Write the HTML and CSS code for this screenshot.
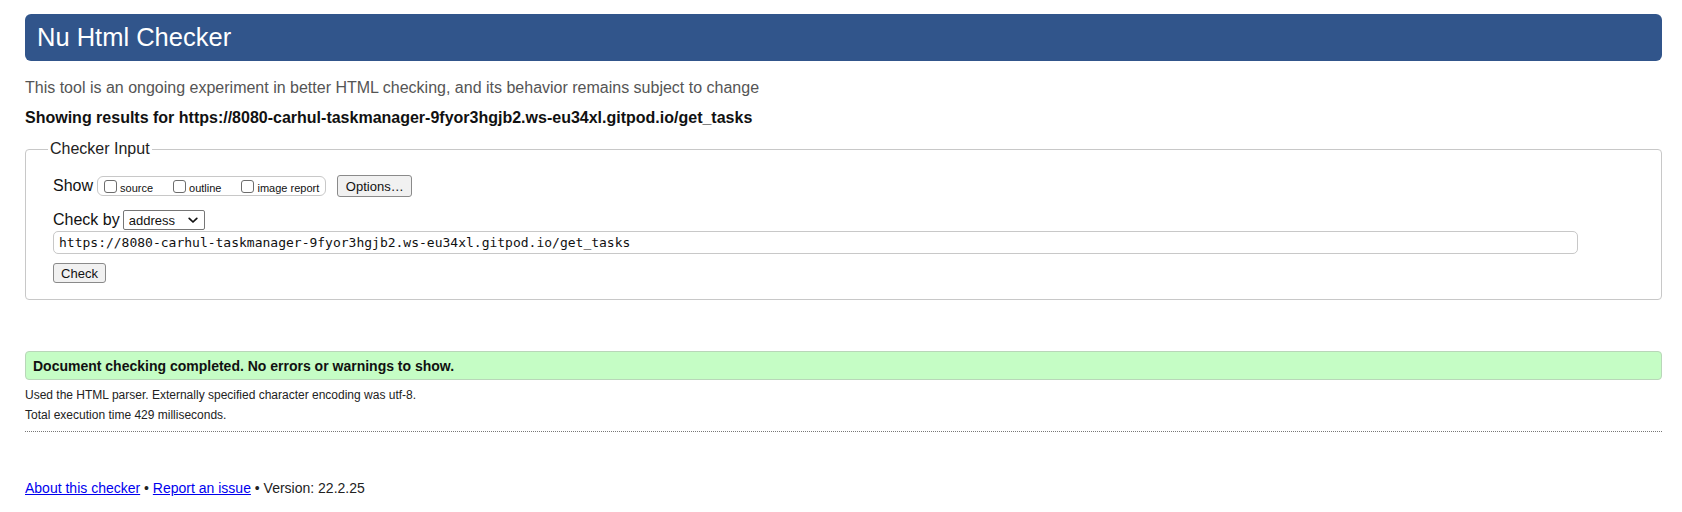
FILE: index.html
```html
<!DOCTYPE html>
<html lang="en">
<head>
<meta charset="utf-8">
<title>Nu Html Checker</title>
<link rel="stylesheet" href="styles.css">
</head>
<body>
<h1 class="title">Nu Html Checker</h1>
<p class="intro">This tool is an ongoing experiment in better HTML checking, and its behavior remains subject to change</p>
<p class="showing">Showing results for https://8080-carhul-taskmanager-9fyor3hgjb2.ws-eu34xl.gitpod.io/get_tasks</p>
<form class="checker">
  <fieldset class="input-set">
    <legend class="legend">Checker Input</legend>
    <div class="row show-row">
      <span class="label">Show</span>
      <span class="cb-group">
        <label class="cb-item"><input type="checkbox" class="cb"><span class="cb-text">source</span></label>
        <label class="cb-item"><input type="checkbox" class="cb"><span class="cb-text">outline</span></label>
        <label class="cb-item"><input type="checkbox" class="cb"><span class="cb-text">image report</span></label>
      </span>
      <button type="button" class="btn options">Options…</button>
    </div>
    <div class="row by-row">
      <span class="label">Check by</span>
      <span class="select-wrap">
        <select class="select"><option>address</option></select>
        <svg class="chev" width="10" height="7" viewBox="0 0 10 7"><path d="M1.2 1.3 L5 5 L8.8 1.3" fill="none" stroke="#111" stroke-width="1.7" stroke-linecap="round" stroke-linejoin="round"/></svg>
      </span>
    </div>
    <input class="url" type="text" value="https://8080-carhul-taskmanager-9fyor3hgjb2.ws-eu34xl.gitpod.io/get_tasks">
    <div class="row">
      <button type="button" class="btn check">Check</button>
    </div>
  </fieldset>
</form>
<p class="success">Document checking completed. No errors or warnings to show.</p>
<div class="details">
  <p class="detail">Used the HTML parser. Externally specified character encoding was utf-8.</p>
  <p class="detail">Total execution time 429 milliseconds.</p>
</div>
<p class="footer"><a href="#">About this checker</a> • <a href="#">Report an issue</a> • Version: 22.2.25</p>
</body>
</html>
```

FILE: styles.css
```css
html, body {
  background: #fff;
}
body {
  margin: 0;
  padding: 14px 20px 0 25px;
  font-family: "Liberation Sans", Arial, Helvetica, sans-serif;
  font-size: 16px;
  color: #111;
}
.title {
  margin: 0;
  height: 47px;
  display: flex;
  align-items: center;
  padding-left: 12px;
  background: #31558b;
  color: #fff;
  font-size: 25.5px;
  font-weight: normal;
  border-radius: 6px;
}
.intro {
  margin: 17px 0 0;
  line-height: 20px;
  color: #555;
}
.showing {
  margin: 10px 0 0;
  line-height: 20px;
  font-weight: bold;
  color: #111;
}
.checker {
  margin: 11px 0 0;
}
.input-set {
  margin: 0;
  padding: 0 20px 16px 27px;
  border: 1px solid #c8c8c8;
  border-radius: 4px;
  min-width: 0;
}
.legend {
  margin-left: -5px;
  padding: 0 2px;
  line-height: 20px;
  color: #222;
}
.row {
  display: flex;
  align-items: center;
}
.show-row {
  margin-top: 16px;
  height: 22px;
}
.label {
  line-height: 20px;
  color: #111;
}
.cb-group {
  display: flex;
  align-items: center;
  height: 18px;
  margin-left: 4px;
  padding: 0 6px;
  border: 1px solid #c8c8c8;
  border-radius: 6px;
}
.cb-item {
  display: flex;
  align-items: flex-end;
  margin-right: 20px;
}
.cb-item:last-child {
  margin-right: 0;
}
.cb {
  appearance: none;
  -webkit-appearance: none;
  width: 13px;
  height: 13px;
  margin: 0 3px 0 0;
  border: 1px solid #6d6d6d;
  border-radius: 3px;
  background: #fff;
}
.cb-text {
  font-size: 11px;
  line-height: 12px;
  position: relative;
  top: 1px;
  color: #111;
}
.btn {
  font-family: "Liberation Sans", Arial, Helvetica, sans-serif;
  font-size: 13px;
  color: #111;
  background: #f1f1f1;
  border: 1px solid #8a8a8a;
  border-radius: 3px;
  margin: 0;
}
.options {
  margin-left: 11px;
  height: 22px;
  width: 75px;
  padding: 0;
}
.by-row {
  margin-top: 13px;
  height: 20px;
}
.select-wrap {
  position: relative;
  display: inline-block;
  margin-left: 3px;
}
.select {
  appearance: none;
  -webkit-appearance: none;
  width: 82px;
  height: 20px;
  padding: 0 0 0 5px;
  border: 1px solid #767676;
  border-radius: 2px;
  background: #fff;
  font-family: "Liberation Sans", Arial, Helvetica, sans-serif;
  font-size: 13px;
  color: #111;
}
.chev {
  position: absolute;
  right: 7px;
  top: 7px;
  pointer-events: none;
}
.url {
  display: block;
  box-sizing: border-box;
  margin: 1px 0 0;
  width: 1525px;
  height: 23px;
  padding: 0 5px;
  border: 1px solid #c8c8c8;
  border-radius: 5px;
  font-family: "DejaVu Sans Mono", Menlo, monospace;
  font-size: 13px;
  color: #111;
  background: #fff;
}
.check {
  margin-top: 9px;
  width: 53px;
  height: 20px;
  padding: 0;
}
.success {
  margin: 51px 0 0;
  height: 29px;
  box-sizing: border-box;
  display: flex;
  align-items: center;
  padding-left: 7px;
  background: #c5fdc5;
  border: 1px solid #b9d6b9;
  border-radius: 4px;
  font-size: 14px;
  font-weight: bold;
  color: #111;
}
.details {
  margin-top: 5px;
  padding-bottom: 6px;
  border-bottom: 1px dotted #777;
}
.detail {
  margin: 0;
  font-size: 12px;
  line-height: 20px;
  color: #222;
}
.footer {
  margin: 46px 0 0;
  font-size: 14px;
  line-height: 20px;
  color: #222;
}
.footer a {
  color: #0000ee;
  text-decoration: underline;
}
```
